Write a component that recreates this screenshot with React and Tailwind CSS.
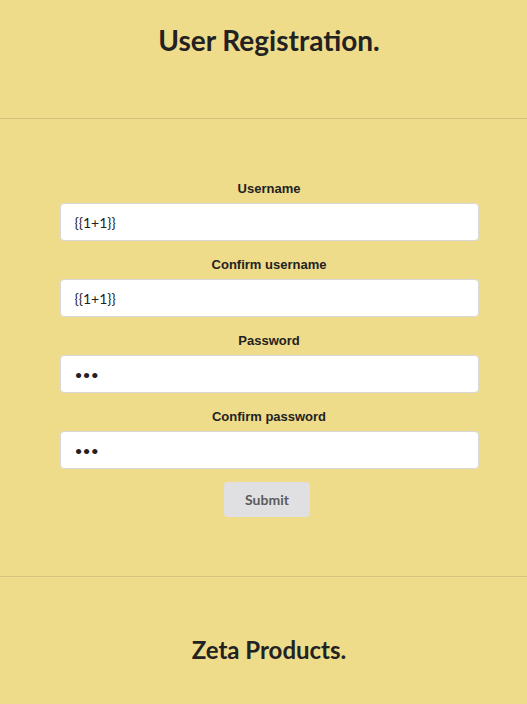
import React from "react";

const Field = ({ label, type, value }) => (
  <div className="flex flex-col items-center">
    <label className="h-[16px] text-[13px] leading-[16px] font-bold text-[#222] font-['Liberation_Sans',Arial,sans-serif]">
      {label}
    </label>
    <input
      type={type}
      defaultValue={value}
      className="mt-[6px] h-[38px] w-[419px] rounded-[4px] border border-[#d9d9d9] bg-white px-[14px] text-[14px] text-[#222] font-['Lato',sans-serif] outline-none"
    />
  </div>
);

const App = () => {
  return (
    <div className="min-h-[704px] w-full bg-[#efdc8a] font-['Lato',sans-serif]">
      <header className="flex h-[119px] items-start justify-center border-b border-[#d5c47c] pl-[11px] pt-[22px]">
        <h1 className="text-[28px] leading-[36px] font-bold text-[#222]">User Registration.</h1>
      </header>
      <main className="flex h-[458px] flex-col items-center border-b border-[#d5c47c] pl-[11px] pt-[62px]">
        <div className="flex flex-col gap-[16px]">
          <Field label="Username" type="text" value="{{1+1}}" />
          <Field label="Confirm username" type="text" value="{{1+1}}" />
          <Field label="Password" type="password" value="abc" />
          <Field label="Confirm password" type="password" value="abc" />
        </div>
        <button className="mt-[13px] mr-[4px] h-[35px] w-[86px] rounded-[4px] bg-[#e0e0e2] text-[14px] font-bold text-[#5b5b5b]">
          Submit
        </button>
      </main>
      <footer className="flex h-[127px] items-start justify-center pl-[11px] pt-[58px]">
        <h2 className="text-[24px] leading-[30px] font-bold text-[#222]">Zeta Products.</h2>
      </footer>
    </div>
  );
};

export default App;
